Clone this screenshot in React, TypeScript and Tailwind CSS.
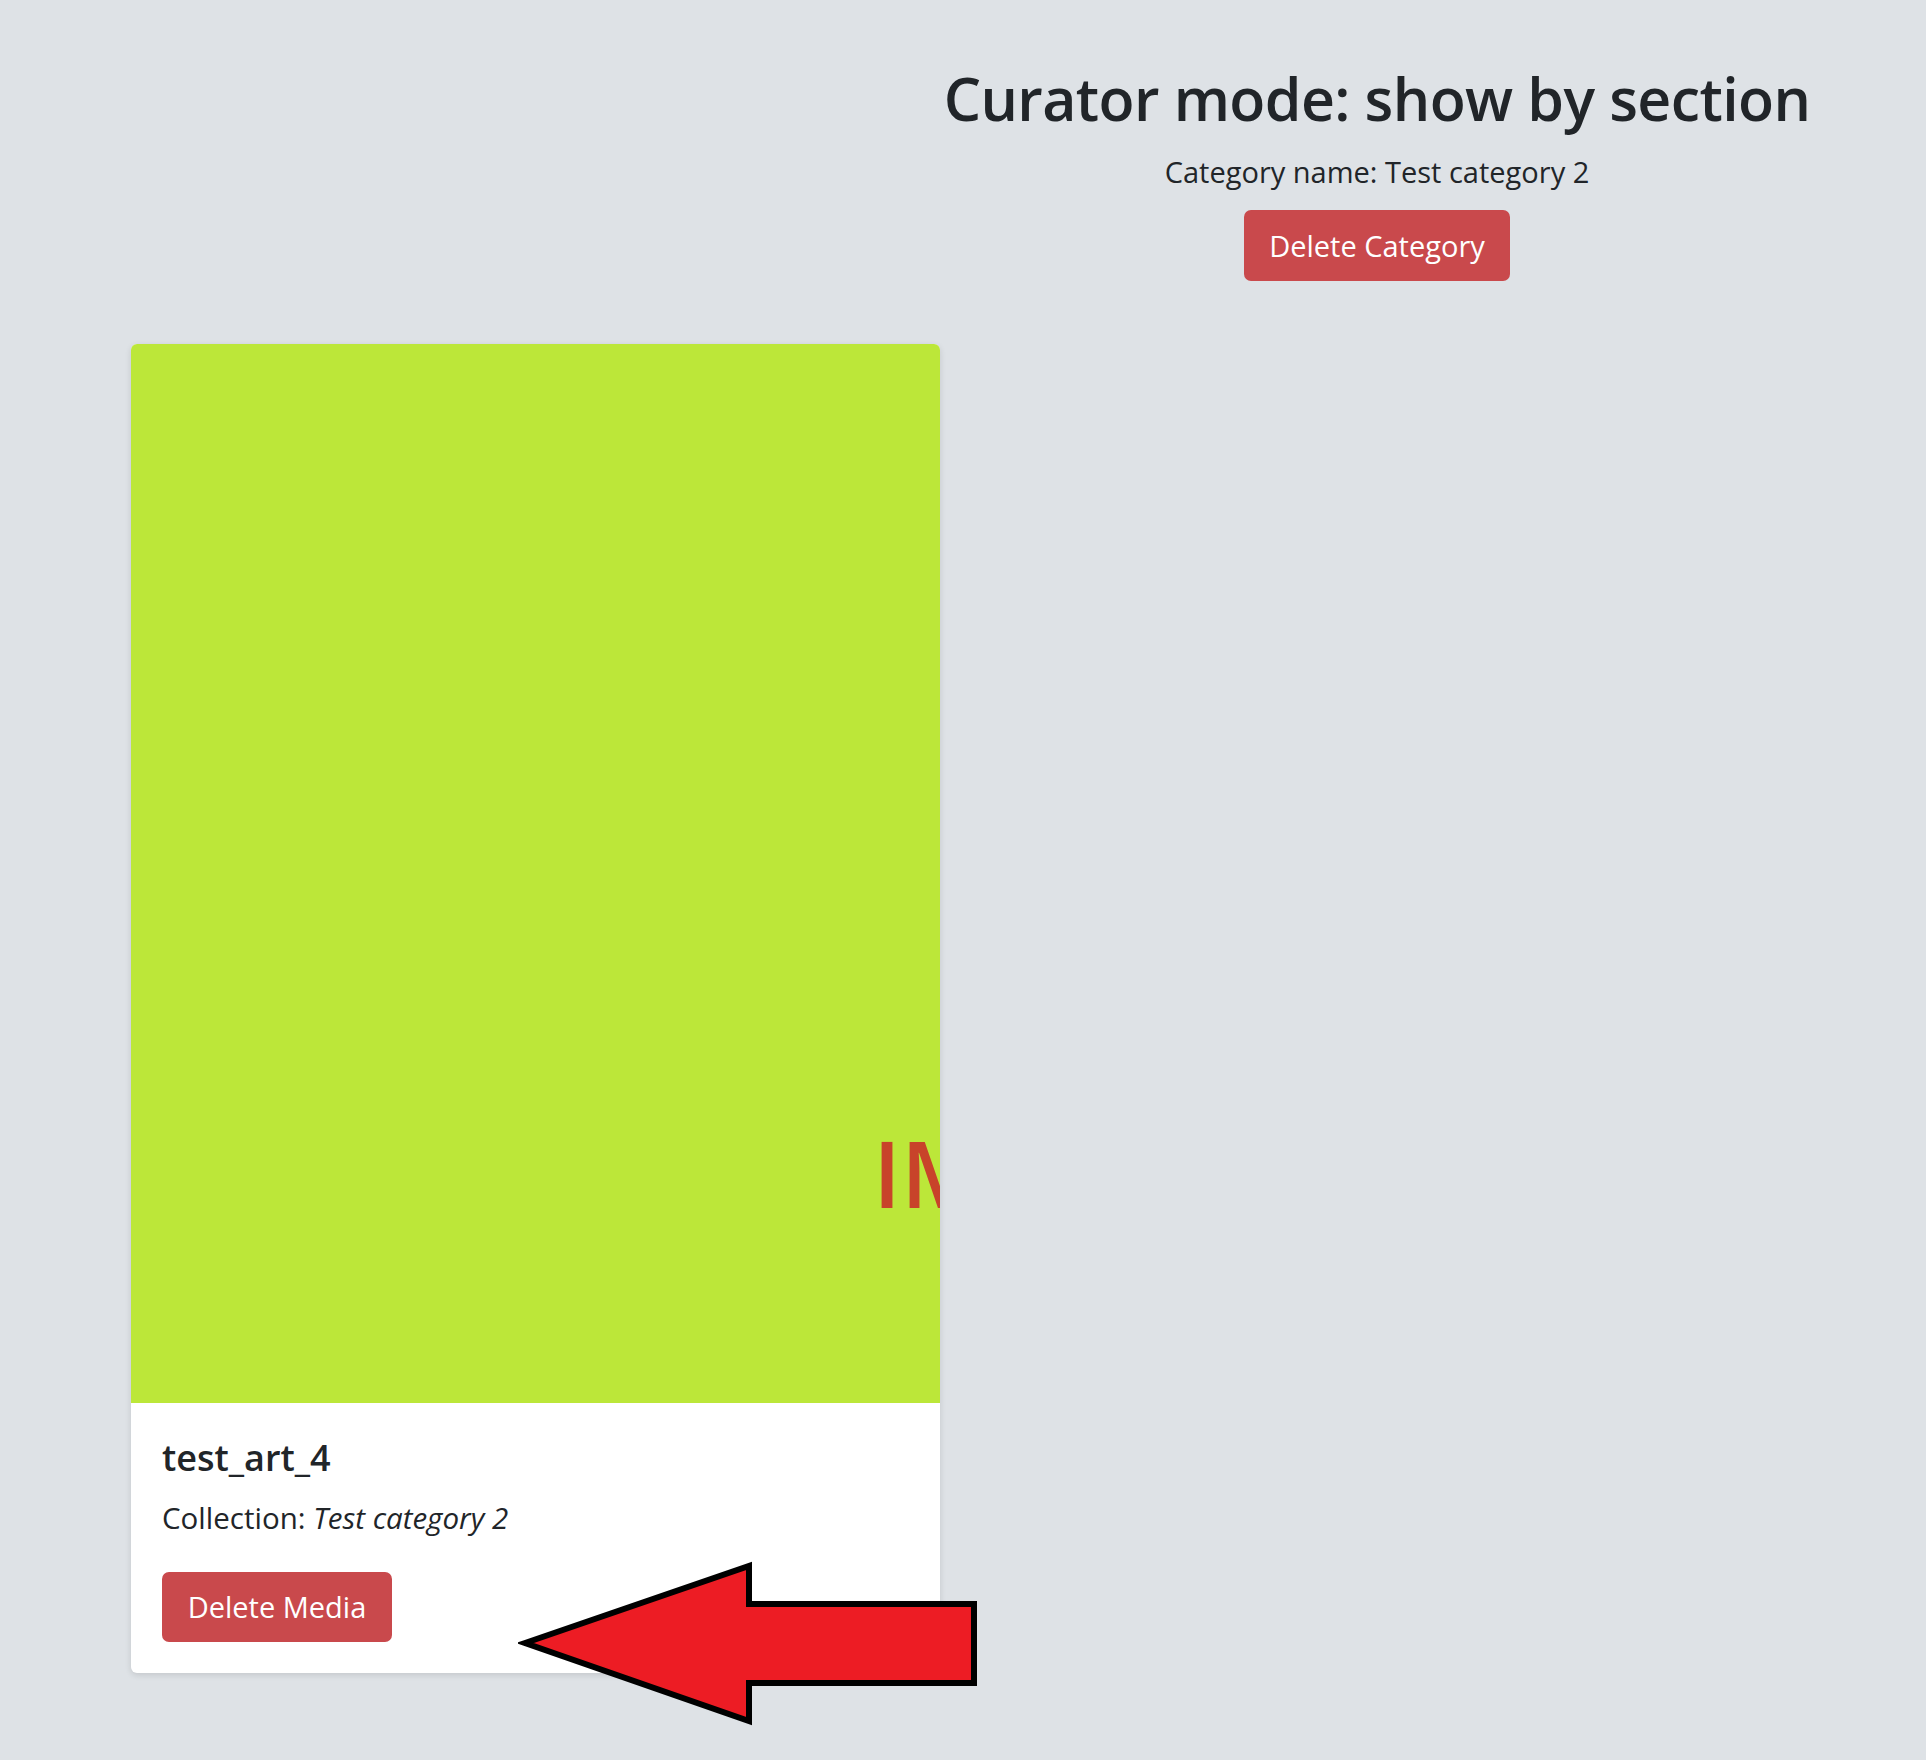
import React from "react";

const font = { fontFamily: '"Open Sans", "Noto Sans", sans-serif' };

function ArrowOverlay() {
  return (
    <svg
      className="pointer-events-none absolute left-[518px] top-[1558px]"
      width="464"
      height="172"
      viewBox="518 1558 464 172"
      aria-hidden="true"
    >
      <polygon
        points="525,1643 749,1566 749,1604 974,1604 974,1683 749,1683 749,1721"
        fill="#ed1c24"
        stroke="#000"
        strokeWidth="6"
        strokeLinejoin="miter"
      />
    </svg>
  );
}

function MediaCard() {
  return (
    <article className="w-[809px] overflow-hidden rounded-md bg-white shadow-[0_2px_6px_rgba(0,0,0,0.12)]">
      <div className="relative h-[1059px] overflow-hidden bg-[#bce739]">
        <span className="absolute left-[742px] top-[783px] text-[92px] font-semibold leading-none text-[#c8432a]">
          IMAGE
        </span>
      </div>
      <div className="px-[31px] pb-[31px] pt-[32px]">
        <h5 className="text-[36px] font-semibold leading-tight text-[#212529]">test_art_4</h5>
        <p className="mt-[16px] text-[29.5px] leading-normal text-[#212529]">
          Collection: <em>Test category 2</em>
        </p>
        <button className="mt-[31px] h-[70px] w-[230px] rounded-[7px] bg-[#c9494c] text-[29px] text-white">
          Delete Media
        </button>
      </div>
    </article>
  );
}

export default function App() {
  return (
    <div className="relative min-h-[1760px] w-full bg-[#dee2e6]" style={font}>
      <header className="grid grid-cols-[828px_1fr] pt-[63px]">
        <div />
        <div className="flex flex-col items-center text-[#212529]">
          <h1 className="text-[59px] font-semibold leading-[1.2] tracking-[-0.01em]">
            Curator mode: show by section
          </h1>
          <p className="mt-[16px] text-[29px] leading-normal">Category name: Test category 2</p>
          <button className="mt-[17px] h-[71px] w-[266px] rounded-[7px] bg-[#c9494c] text-[29px] text-white">
            Delete Category
          </button>
        </div>
      </header>
      <main className="pl-[131px] pt-[63px]">
        <MediaCard />
      </main>
      <ArrowOverlay />
    </div>
  );
}
